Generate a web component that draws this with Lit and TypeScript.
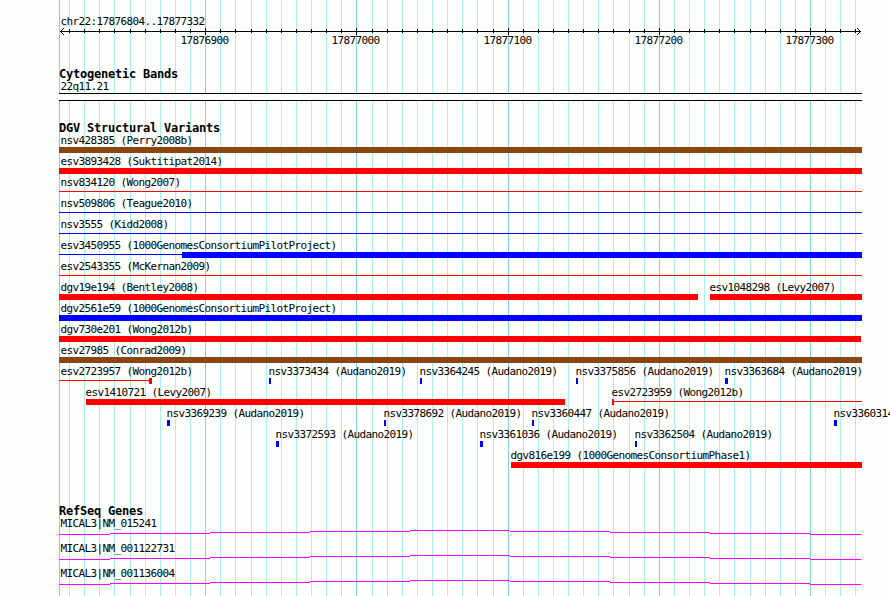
import { LitElement, html, svg, css } from 'lit';
import { customElement, property } from 'lit/decorators.js';

// All x values are canvas pixels; the panel itself starts at ORIGIN.
const ORIGIN = 59;
const END = 862;

type Span = { from: number; to: number; thin?: boolean };
type Feature = { name: string; color: string; spans: Span[] };

const RED = '#ff0000';
const BLUE = '#0000ff';
const BROWN = '#8b4513';

const bar = (name: string, color: string, from = ORIGIN, to = END): Feature => ({
  name,
  color,
  spans: [{ from, to }],
});

const line = (name: string, color: string): Feature => ({
  name,
  color,
  spans: [{ from: ORIGIN, to: END, thin: true }],
});

const audano = (id: string, from: number, width = 2) =>
  bar(`${id} (Audano2019)`, BLUE, from, from + width);

const variants: Feature[][] = [
  [bar('nsv428385 (Perry2008b)', BROWN)],
  [bar('esv3893428 (Suktitipat2014)', RED)],
  [line('nsv834120 (Wong2007)', RED)],
  [line('nsv509806 (Teague2010)', BLUE)],
  [line('nsv3555 (Kidd2008)', BLUE)],
  [
    {
      name: 'esv3450955 (1000GenomesConsortiumPilotProject)',
      color: BLUE,
      spans: [
        { from: 59, to: 182, thin: true },
        { from: 182, to: END },
      ],
    },
  ],
  [line('esv2543355 (McKernan2009)', RED)],
  [
    bar('dgv19e194 (Bentley2008)', RED, 59, 698),
    bar('esv1048298 (Levy2007)', RED, 710),
  ],
  [bar('dgv2561e59 (1000GenomesConsortiumPilotProject)', BLUE)],
  [bar('dgv730e201 (Wong2012b)', RED, 59, 861)],
  [bar('esv27985 (Conrad2009)', BROWN)],
  [
    {
      name: 'esv2723957 (Wong2012b)',
      color: RED,
      spans: [
        { from: 59, to: 149, thin: true },
        { from: 149, to: 152 },
      ],
    },
    audano('nsv3373434', 269),
    audano('nsv3364245', 420),
    audano('nsv3375856', 576),
    audano('nsv3363684', 725, 3),
  ],
  [
    bar('esv1410721 (Levy2007)', RED, 86, 565),
    {
      name: 'esv2723959 (Wong2012b)',
      color: RED,
      spans: [
        { from: 612, to: 614 },
        { from: 614, to: END, thin: true },
      ],
    },
  ],
  [
    audano('nsv3369239', 167, 3),
    audano('nsv3378692', 384),
    audano('nsv3360447', 532),
    audano('nsv3360314', 834, 3),
  ],
  [
    audano('nsv3372593', 276, 3),
    audano('nsv3361036', 480, 3),
    audano('nsv3362504', 635),
  ],
  [bar('dgv816e199 (1000GenomesConsortiumPhase1)', RED, 511)],
];

const genes = ['MICAL3|NM_015241', 'MICAL3|NM_001122731', 'MICAL3|NM_001136004'];

// One grid line every 10 bp, every tenth of them is labelled.
const ticks = Array.from({ length: 53 }, (_, i) => ({
  x: Math.floor(69.63 + i * 15.121) - ORIGIN,
  major: i % 10 === 9,
  pos: 17876810 + i * 10,
}));

const textStyles = css`
  .label {
    height: 13px;
    font: 11px/13px 'DejaVu Sans Mono', monospace;
    letter-spacing: calc(6px - 0.602em);
    text-indent: 0.5px;
    white-space: pre;
    color: #000;
  }
`;

@customElement('genome-ruler')
export class GenomeRuler extends LitElement {
  @property() region = '';

  static styles = [
    textStyles,
    css`
      :host {
        display: block;
      }
      .region {
        padding-left: 1px;
      }
      svg {
        display: block;
      }
      .numbers {
        display: grid;
        margin-top: -1px;
      }
      .numbers .label {
        grid-area: 1 / 1;
        justify-self: start;
      }
    `,
  ];

  render() {
    return html`
      <div class="label region">${this.region}</div>
      <svg width="803" height="7" shape-rendering="crispEdges" fill="#000">
        <rect x="1" y="3" width="801" height="1" />
        <path d="M1 3h1v1h-1zM2 2h1v3h-1zM3 1h1v1h-1zM3 5h1v1h-1zM4 0h1v1h-1zM4 6h1v1h-1z" />
        <path d="M801 3h1v1h-1zM800 2h1v3h-1zM799 1h1v1h-1zM799 5h1v1h-1zM798 0h1v1h-1zM798 6h1v1h-1z" />
        ${ticks.map(t => svg`
          <rect x=${t.x} y=${t.major ? 0 : 1} width="1" height=${t.major ? 7 : 4} />
        `)}
      </svg>
      <div class="numbers">
        ${ticks.filter(t => t.major).map(t => html`
          <div class="label" style="margin-left: ${t.x - 25}px">${t.pos}</div>
        `)}
      </div>
    `;
  }
}

@customElement('feature-row')
export class FeatureRow extends LitElement {
  @property({ attribute: false }) features: Feature[] = [];

  static styles = [
    textStyles,
    css`
      :host {
        display: grid;
        height: 21px;
      }
      .feature {
        grid-area: 1 / 1;
      }
      .label {
        width: max-content;
      }
      .glyph {
        display: grid;
        height: 6px;
      }
      .span {
        grid-area: 1 / 1;
      }
      .thin {
        height: 1px;
        margin-top: 2px;
      }
    `,
  ];

  renderFeature(f: Feature) {
    const labelX = Math.max(1, f.spans[0].from - 1 - ORIGIN);
    return html`
      <div class="feature">
        <div class="label" style="margin-left: ${labelX}px">${f.name}</div>
        <div class="glyph">
          ${f.spans.map(s => html`
            <div
              class="span ${s.thin ? 'thin' : ''}"
              style="margin-left: ${s.from - ORIGIN}px; width: ${s.to - s.from}px; background: ${f.color}"
            ></div>
          `)}
        </div>
      </div>
    `;
  }

  render() {
    return this.features.map(f => this.renderFeature(f));
  }
}

@customElement('app-root')
export class AppRoot extends LitElement {
  static styles = [
    textStyles,
    css`
      :host {
        display: block;
        width: 890px;
        height: 596px;
        overflow: hidden;
        background: #fdfffc;
      }
      .panel {
        display: grid;
        grid-template-columns: 803px;
        height: 596px;
        padding-left: 59px;
      }
      .grid,
      .tracks {
        grid-area: 1 / 1;
      }
      .grid {
        display: block;
      }
      .tracks {
        padding-top: 15px;
      }
      .track {
        margin-top: 21px;
      }
      .genes {
        margin-top: 35px;
      }
      .title {
        height: 12px;
        font: bold 12px/13px 'DejaVu Sans Mono', monospace;
        letter-spacing: calc(7px - 0.602em);
        white-space: pre;
        color: #000;
      }
      .track .label {
        padding-left: 1px;
      }
      .band {
        box-sizing: border-box;
        height: 8px;
        border: solid #000;
        border-width: 1px 0;
        background: #fdfffc;
      }
      .gene {
        height: 25px;
      }
      .gene svg {
        display: block;
      }
    `,
  ];

  renderIntron() {
    const stops = [59, 110, 210, 310, 410, 510, 610, 710, 810, 861];
    return html`
      <svg width="803" height="5" shape-rendering="crispEdges" fill="#ff00ff">
        ${stops.slice(1).map((to, i) => svg`
          <rect x=${stops[i] - ORIGIN} y=${Math.abs(4 - i)} width=${to - stops[i]} height="1" />
        `)}
      </svg>
    `;
  }

  render() {
    return html`
      <div class="panel">
        <svg class="grid" width="803" height="596" shape-rendering="crispEdges">
          <rect x="0" y="0" width="1" height="596" fill="#87ceeb" />
          ${ticks.map(t => svg`
            <rect x=${t.x} y="0" width="1" height="596" fill=${t.major ? '#87ceeb' : '#afeeee'} />
          `)}
        </svg>
        <div class="tracks">
          <genome-ruler region="chr22:17876804..17877332"></genome-ruler>
          <div class="track">
            <div class="title">Cytogenetic Bands</div>
            <div class="label">22q11.21</div>
            <div class="band"></div>
          </div>
          <div class="track">
            <div class="title">DGV Structural Variants</div>
            ${variants.map(row => html`<feature-row .features=${row}></feature-row>`)}
          </div>
          <div class="track genes">
            <div class="title">RefSeq Genes</div>
            ${genes.map(name => html`
              <div class="gene">
                <div class="label">${name}</div>
                ${this.renderIntron()}
              </div>
            `)}
          </div>
        </div>
      </div>
    `;
  }
}
